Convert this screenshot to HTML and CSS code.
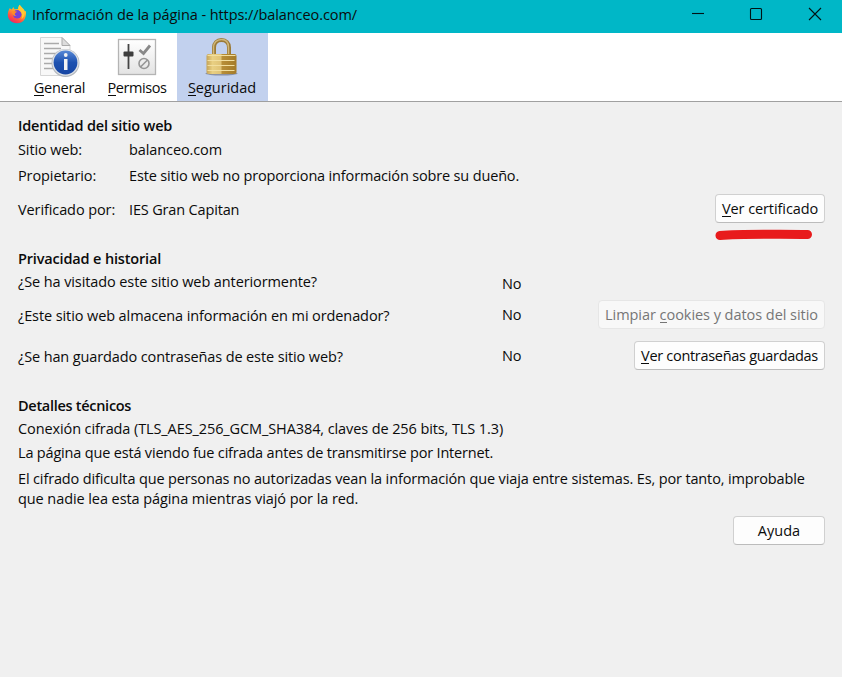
FILE: index.html
```html
<!DOCTYPE html>
<html lang="es">
<head>
<meta charset="utf-8">
<title>Información de la página</title>
<link rel="stylesheet" href="styles.css">
</head>
<body>
<header class="titlebar">
  <svg class="app-icon" width="20" height="20" viewBox="0 0 20 20">
    <defs>
      <linearGradient id="fire" x1=".8" y1="0" x2=".25" y2="1"><stop offset="0" stop-color="#ffe23f"/><stop offset=".45" stop-color="#ff9a2b"/><stop offset=".75" stop-color="#ff4b45"/><stop offset="1" stop-color="#e8246d"/></linearGradient>
    </defs>
    <path d="M2.600 4.200 4.800 5.500 6.300 3 7.500 5.200 11 5 12.600.8C14 3 17 5 18.100 7.400L19 7c.5 8-3 12.300-9 12.300C4.500 19.300.8 15.500.8 10.800.8 8 1.600 6 2.600 4.200Z" fill="url(#fire)"/>
    <circle cx="10.200" cy="10.300" r="4.300" fill="#7541d8"/>
    <path d="M4.800 7.400C7 6.400 8 7.400 10 7.600c-.5 1.300-2.200 1.200-2.200 2.300 0 1 .8 1.700 1.800 1.900-2.600.8-4.900-1-4.800-4.400Z" fill="#ff8b27"/>
    <path d="M12.600.8c1.500 2.700 4.800 4.400 5 8.200.1 3-1.500 5.200-3.300 6.200 1.700-3.700.8-7-1.800-8.500-2-1.700-1.500-4 .1-5.900Z" fill="#ffc934"/>
  </svg>
  <h1 class="window-title">Información de la página - https://balanceo.com/</h1>
  <svg class="window-controls" width="132" height="33" viewBox="0 0 132 33" fill="none" stroke="#001315" stroke-width="1.100">
    <path d="M2 13.500h12"/><rect x="60.500" y="8.500" width="11" height="11" rx="1"/><path d="m119 8 12 12m0-12-12 12"/>
  </svg>
</header>
<nav class="toolbar">
  <a class="tab general">
    <svg width="42" height="40" viewBox="0 0 42 40">
      <defs><linearGradient id="blue" x2="0" y2="1"><stop stop-color="#5788d6"/><stop offset=".5" stop-color="#1d51b0"/><stop offset="1" stop-color="#1746a3"/></linearGradient></defs>
      <path d="M1.500.5H23l8 8V38.500H1.500Z" fill="#f8f8f8" stroke="#d6d6d6"/>
      <path d="M23 .5v8h8Z" fill="#ddd" stroke="#aaa"/>
      <path d="M5 6.500h15M5 11.500h17M5 16.500h16M5 21.500h10M5 26.500h9M5 31.500h10" stroke="#aaa" stroke-width="1.300"/>
      <circle cx="26.500" cy="26" r="14" fill="#b4b9bf"/><circle cx="26.500" cy="25.500" r="13.200" fill="#dfe2e6"/><circle cx="26.500" cy="25.500" r="11.900" fill="url(#blue)"/>
      <path d="M25 22h3.500v11H25Z" fill="#f3f3f3"/><circle cx="26.750" cy="18" r="1.900" fill="#f3f3f3"/>
    </svg>
    <span><u>G</u>eneral</span></a>
  <a class="tab permisos">
    <svg width="42" height="40" viewBox="0 0 42 40">
      <defs><linearGradient id="panel" x2="0" y2="1"><stop stop-color="#fff"/><stop offset="1" stop-color="#e3e3e3"/></linearGradient></defs>
      <rect x="2.500" y="2.500" width="37" height="35" fill="url(#panel)" stroke="#b4b4b4" stroke-width="1.300"/>
      <path d="M12.500 7v25" stroke="#444" stroke-width="1.800"/><rect x="7.500" y="14.500" width="10" height="5" rx="1" fill="#3e3e3e"/>
      <path d="m23.500 13 4 3.500L34 8.500" fill="none" stroke="#888" stroke-width="2.800"/>
      <g fill="none" stroke="#969696" stroke-width="1.600"><circle cx="28" cy="26.500" r="5"/><path d="m24.500 30 7-7"/></g>
    </svg>
    <span><u>P</u>ermisos</span></a>
  <a class="tab seguridad">
    <svg width="42" height="40" viewBox="0 0 42 40">
      <defs><linearGradient id="gold"><stop stop-color="#c5a355"/><stop offset=".2" stop-color="#e9d083"/><stop offset=".49" stop-color="#dfc275"/><stop offset=".51" stop-color="#b88f38"/><stop offset="1" stop-color="#a47b28"/></linearGradient></defs>
      <ellipse cx="20.500" cy="36.500" rx="16" ry="2" fill="#8a92a5"/>
      <path d="M13 19V10.500C13 6 16 3 20.500 3s7.500 3 7.500 7.500V19" fill="none" stroke="#9b7a37" stroke-width="4"/>
      <path d="M12.500 19V10.500C12.500 6 15.500 2.500 20.500 2.500s7 3 7 8V19" fill="none" stroke="#d0b778" stroke-width="1.500"/>
      <rect x="5.500" y="17" width="30" height="20" rx="2" fill="url(#gold)"/>
      <path d="M6.500 18.500h28M6.500 23.500h27M6.500 28.500h27M6.500 33.500h27" stroke="#f2df9f"/>
    </svg>
    <span><u>S</u>eguridad</span></a>
</nav>
<main class="panel">
  <section class="identity">
    <h2 class="snug">Identidad del sitio web</h2>
    <div class="fact site"><span>Sitio web:</span><span>balanceo.com</span></div>
    <div class="fact owner"><span>Propietario:</span><span class="tight">Este sitio web no proporciona información sobre su dueño.</span></div>
    <div class="fact verified"><span>Verificado por:</span><span class="tight">IES Gran Capitan</span>
      <div class="certificate"><button><u>V</u>er certificado</button>
        <svg class="marker" width="98" height="12" viewBox="0 0 98 12"><path d="M5 6.500C28 4.500 55 5.500 92.500 5.500" fill="none" stroke="#e81b1c" stroke-width="9" stroke-linecap="round"/></svg>
      </div></div>
  </section>
  <section class="privacy">
    <h2>Privacidad e historial</h2>
    <div class="question visited"><span>¿Se ha visitado este sitio web anteriormente?</span><span class="answer">No</span></div>
    <div class="question stored"><span class="prompt">¿Este sitio web almacena información en mi ordenador?</span><span class="answer">No</span><button class="cookies" disabled>Limpiar <u>c</u>ookies y datos del sitio</button></div>
    <div class="question passwords"><span class="prompt">¿Se han guardado contraseñas de este sitio web?</span><span class="answer">No</span><button class="saved"><u>V</u>er contraseñas guardadas</button></div>
  </section>
  <section class="details">
    <h2 class="tighter">Detalles técnicos</h2>
    <p>Conexión cifrada (TLS_AES_256_GCM_SHA384, claves de 256 bits, TLS 1.3)</p>
    <p class="encrypted">La página que está viendo fue cifrada antes de transmitirse por Internet.</p>
    <p class="explanation">El cifrado dificulta que personas no autorizadas vean la información que viaja entre sistemas. Es, por tanto, improbable<br><span class="last-line">que nadie lea esta página mientras viajó por la red.</span></p>
  </section>
  <footer><button class="help">Ayuda</button></footer>
</main>
</body>
</html>
```
FILE: styles.css
```css
* { box-sizing: border-box; }
body {
  margin: 0;
  width: 842px;
  height: 677px;
  overflow: hidden;
  background: #f0f0f0;
  font: 14.5px/20px "Open Sans", "Noto Sans", sans-serif;
  letter-spacing: -.1px;
  color: #0b0b0b;
  white-space: nowrap;
}
h1, h2, p { margin: 0; font-size: inherit; }
h2 { font-weight: 600; letter-spacing: -.16px; }
u { text-decoration: none; box-shadow: inset 0 -1px 0 currentColor; display: inline-block; height: 18px; line-height: 20px; vertical-align: top; }

.titlebar { height: 33px; padding: 0 20px 0 7px; background: #00b7c7; display: flex; align-items: flex-start; }
.app-icon { margin-top: 4px; }
.window-title { flex: 1; margin: 5px 0 0 5px; font-weight: 400; letter-spacing: -.08px; }

.toolbar { height: 69px; padding-left: 22px; background: #fff; border-bottom: 1px solid #a0a0a0; display: flex; }
.tab { display: flex; flex-direction: column; align-items: center; gap: 1px; padding-top: 4px; }
.general { width: 75px; letter-spacing: -.3px; }
.permisos { width: 80px; letter-spacing: -.45px; }
.seguridad { width: 91px; padding-right: 1px; background: #c2d1ee; letter-spacing: 0; }
.tab svg { flex: none; }

.panel { padding: 14px 17px 0 18px; }
.snug { letter-spacing: -.21px; }
.tight { letter-spacing: -.16px; }
.tighter { letter-spacing: -.29px; }
.fact { display: grid; grid-template-columns: 111px 1fr auto; align-items: center; }
.site { margin-top: 4px; }
.owner { margin-top: 6px; }
.verified { margin-top: 8px; }
.verified > span, .prompt { padding-top: 2px; }
.certificate { position: relative; }
.marker { position: absolute; left: 0; top: 35px; }

button {
  height: 29px;
  padding: 0 6px;
  border: 1px solid #d0d0d0;
  border-bottom-color: #bcbcbc;
  border-radius: 4px;
  background: #fdfdfd;
  color: #0b0b0b;
  font: inherit;
  letter-spacing: -.09px;
  display: block;
}
button:disabled { background: #f8f8f8; border-color: #e6e6e6; color: #767676; }
.certificate button { width: 110px; }
.cookies { width: 227px; letter-spacing: -.05px; }
.saved { width: 191px; letter-spacing: -.3px; }
.help { width: 92px; letter-spacing: 0; }

.privacy { margin-top: 26px; }
.question { display: grid; grid-template-columns: 484px 1fr auto; align-items: center; }
.visited { margin-top: 3px; align-items: start; }
.visited .answer { margin-top: 2px; }
.stored { margin-top: 6px; }
.passwords { margin-top: 12px; letter-spacing: -.12px; }
.details { margin-top: 26px; }
.details p { margin-top: 3px; }
.details .encrypted { margin-top: 4px; letter-spacing: -.18px; }
.details .explanation { margin-top: 6px; letter-spacing: -.14px; }
.last-line { letter-spacing: -.08px; }
footer { margin-top: 7px; display: flex; justify-content: flex-end; }
```
